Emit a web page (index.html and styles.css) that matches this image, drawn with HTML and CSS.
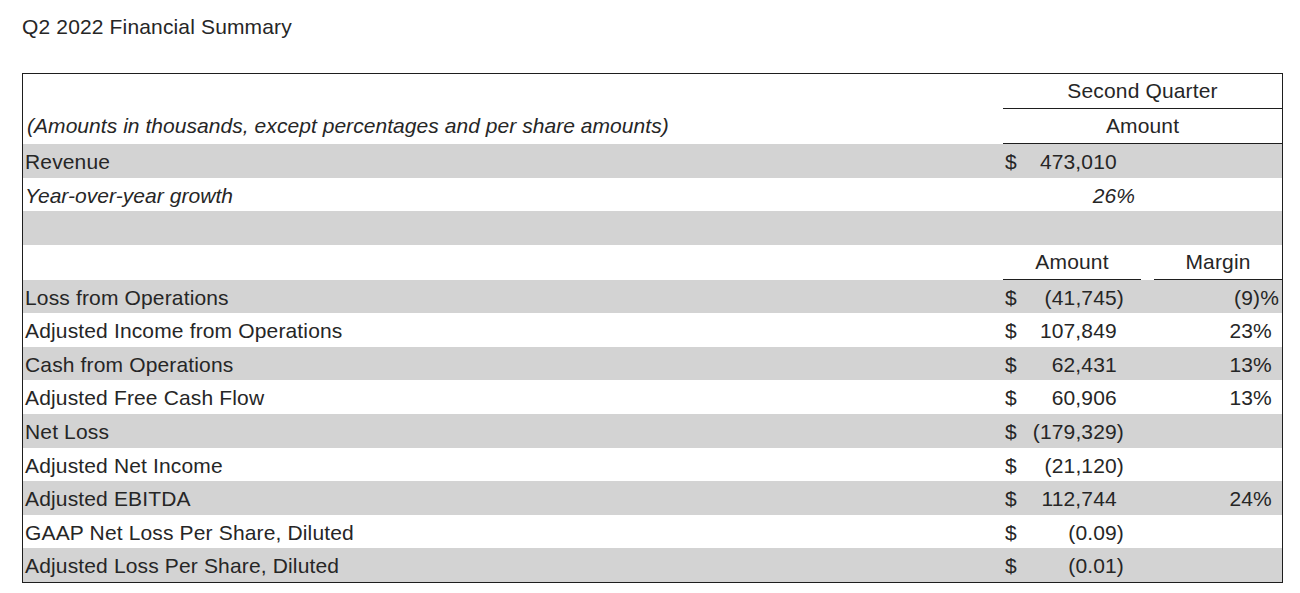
FILE: index.html
```html
<!DOCTYPE html>
<html lang="en">
<head>
<meta charset="utf-8">
<title>Q2 2022 Financial Summary</title>
<link rel="stylesheet" href="styles.css">
</head>
<body>
<div class="page">
  <div class="title">Q2 2022 Financial Summary</div>
  <div class="frame">
    <table class="fin">
      <colgroup>
        <col class="c-label">
        <col class="c-dollar">
        <col class="c-amt">
        <col class="c-gap">
        <col class="c-margin">
      </colgroup>
      <tbody>
        <tr class="hd">
          <td></td>
          <td colspan="4" class="center ul">Second Quarter</td>
        </tr>
        <tr class="hd">
          <td class="it note">(Amounts in thousands, except percentages and per share amounts)</td>
          <td colspan="4" class="center ul">Amount</td>
        </tr>
        <tr class="g">
          <td>Revenue</td>
          <td class="dol">$</td>
          <td class="amt pos">473,010</td>
          <td></td><td></td>
        </tr>
        <tr>
          <td class="it">Year-over-year growth</td>
          <td colspan="2" class="it yoy">26%</td>
          <td></td><td></td>
        </tr>
        <tr class="g">
          <td></td><td></td><td></td><td></td><td></td>
        </tr>
        <tr class="hd">
          <td></td>
          <td colspan="2" class="center ul">Amount</td>
          <td></td>
          <td class="center ul">Margin</td>
        </tr>
        <tr class="g">
          <td>Loss from Operations</td>
          <td class="dol">$</td>
          <td class="amt">(41,745)</td>
          <td></td>
          <td class="mrg">(9)%</td>
        </tr>
        <tr>
          <td>Adjusted Income from Operations</td>
          <td class="dol">$</td>
          <td class="amt pos">107,849</td>
          <td></td>
          <td class="mrg pos">23%</td>
        </tr>
        <tr class="g">
          <td>Cash from Operations</td>
          <td class="dol">$</td>
          <td class="amt pos">62,431</td>
          <td></td>
          <td class="mrg pos">13%</td>
        </tr>
        <tr>
          <td>Adjusted Free Cash Flow</td>
          <td class="dol">$</td>
          <td class="amt pos">60,906</td>
          <td></td>
          <td class="mrg pos">13%</td>
        </tr>
        <tr class="g">
          <td>Net Loss</td>
          <td class="dol">$</td>
          <td class="amt">(179,329)</td>
          <td></td><td></td>
        </tr>
        <tr>
          <td>Adjusted Net Income</td>
          <td class="dol">$</td>
          <td class="amt">(21,120)</td>
          <td></td><td></td>
        </tr>
        <tr class="g">
          <td>Adjusted EBITDA</td>
          <td class="dol">$</td>
          <td class="amt pos">112,744</td>
          <td></td>
          <td class="mrg pos">24%</td>
        </tr>
        <tr>
          <td>GAAP Net Loss Per Share, Diluted</td>
          <td class="dol">$</td>
          <td class="amt">(0.09)</td>
          <td></td><td></td>
        </tr>
        <tr class="g">
          <td>Adjusted Loss Per Share, Diluted</td>
          <td class="dol">$</td>
          <td class="amt">(0.01)</td>
          <td></td><td></td>
        </tr>
      </tbody>
    </table>
  </div>
</div>
</body>
</html>
```

FILE: styles.css
```css
html, body {
  margin: 0;
  padding: 0;
  background: #ffffff;
}

body {
  font-family: "Liberation Sans", Arial, sans-serif;
  color: #262626;
  font-size: 21px;
  letter-spacing: 0.15px;
}

.page {
  padding: 13px 0 0 22px;
  width: 1261px;
}

.title {
  font-size: 21px;
  line-height: 28px;
  height: 28px;
  margin-bottom: 32px;
}

.frame {
  border: 1px solid #1e1e1e;
  width: 1259px;
}

.fin {
  border-collapse: separate;
  border-spacing: 0;
  table-layout: fixed;
  width: 1259px;
}

.c-label { width: 980px; }
.c-dollar { width: 27px; }
.c-amt { width: 111px; }
.c-gap { width: 13px; }
.c-margin { width: 128px; }

.fin tr {
  height: 33.58px;
}

.fin tr.hd {
  height: 35px;
}

.fin td {
  padding: 2px 0 0 0;
  line-height: 31.5px;
  vertical-align: top;
  white-space: nowrap;
  overflow: visible;
}

.fin tr.hd td {
  padding-top: 1px;
}

.fin tr.g td {
  background: #d3d3d3;
}

.fin td:first-child {
  padding-left: 2px;
}

.it {
  font-style: italic;
  letter-spacing: 0.05px;
}

.note {
  padding-left: 4px !important;
}

.center {
  text-align: center;
}

.ul {
  box-shadow: inset 0 -1px 0 #1e1e1e;
}

.dol {
  padding-left: 2px !important;
}

.amt {
  text-align: right;
  padding-right: 17px !important;
}

.mrg {
  text-align: right;
  padding-right: 3px !important;
}

.pos::after {
  content: ")";
  visibility: hidden;
}

.yoy {
  text-align: right;
  padding-right: 6px !important;
}
```
